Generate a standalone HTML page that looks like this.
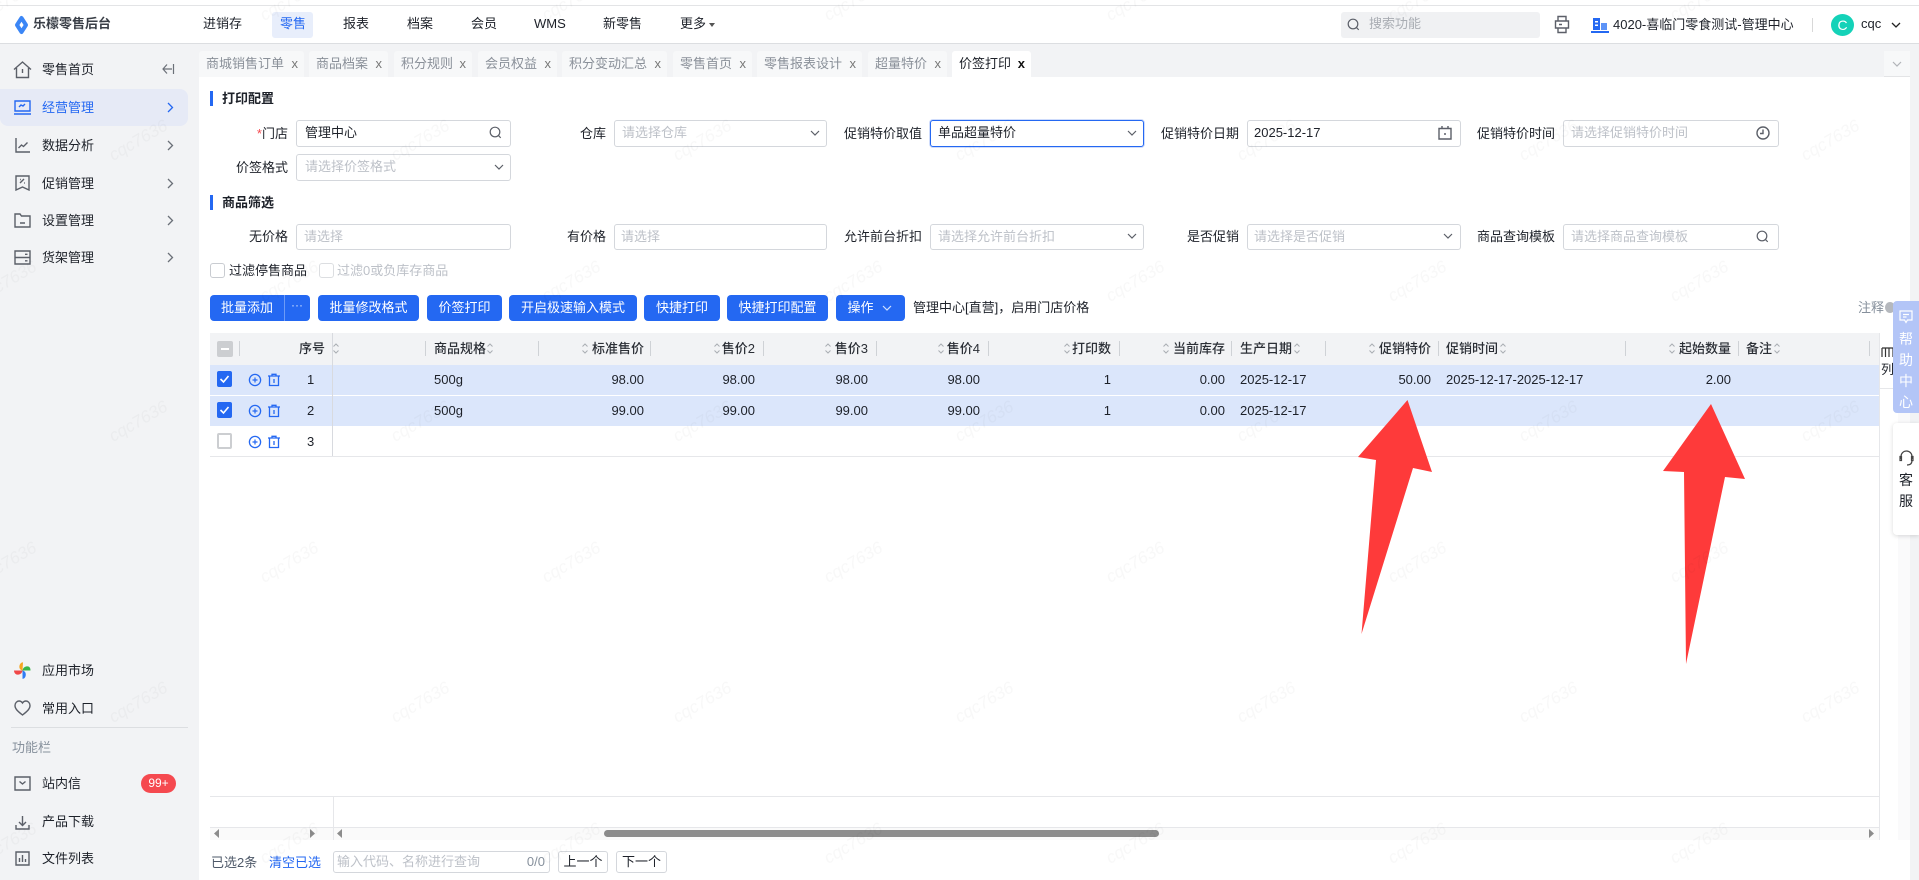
<!DOCTYPE html>
<html lang="zh-CN"><head><meta charset="utf-8"><title>价签打印</title>
<style>
html,body{margin:0;padding:0}
body{width:1919px;height:880px;overflow:hidden;position:relative;background:#fff;font:13px/18px "Liberation Sans","Noto Sans CJK SC",sans-serif;color:#1d2129}
div,span,svg{position:absolute;box-sizing:border-box}
.t{white-space:nowrap;line-height:18px}
.g{color:#86909c}
.p{color:#bdc1c8}
.b{font-weight:500;color:#2b2f36}
.i{background:#fff;border:1px solid #d4d7dc;border-radius:3px;height:27px}
.tab{top:51px;height:26px;background:#f7f8f9;border-radius:3px 3px 0 0;color:#8a9099;line-height:26px;padding-left:7px;white-space:nowrap}
.tab u{position:absolute;right:6px;top:0;text-decoration:none;color:#777;font-size:13px}
.btn{top:295px;height:26px;background:#2468f2;border-radius:4px;color:#fff;text-align:center;line-height:26px;white-space:nowrap}
.bar{width:3px;height:15px;left:210px;background:#2468f2}
.sv{left:160px;width:12px;height:12px}
.dv{top:341px;width:1px;height:15px;background:#cfd2d6}
.ic{fill:none;stroke:#5b5f68;stroke-width:1.4}
.r{text-align:right}
</style></head><body>
<svg width="0" height="0" style="left:0;top:0"><defs>
<g id="caret"><path d="M1.500 4.500L4 2l2.500 2.500M1.500 8.500L4 11l2.500-2.500" fill="none" stroke="#a9adb3" stroke-width="1"/></g>
<g id="plus"><circle cx="7" cy="7" r="5.600" fill="none" stroke="#2468f2" stroke-width="1.300"/><path d="M4.500 7h5M7 4.500v5" stroke="#2468f2" stroke-width="1.200"/></g>
<g id="trash"><path d="M1 3h12M5 3V1.300h4V3M2.500 3v9.500h9V3M7 6v4" fill="none" stroke="#2468f2" stroke-width="1.300"/></g>
<g id="down"><path d="M1 1l4 4 4-4" fill="none" stroke="#5b5f68" stroke-width="1.200"/></g>
<g id="mag"><circle cx="6" cy="6" r="4.800" fill="none" stroke="#5b5f68" stroke-width="1.200"/><path d="M9.500 9.500l2.200 2.400" stroke="#5b5f68" stroke-width="1.200"/></g>
<g id="rt"><path d="M1 1l4.500 4.500L1 10" fill="none" stroke="#6b7078" stroke-width="1.300"/></g>
</defs></svg>

<!-- top -->
<div style="left:0;top:5px;width:1919px;height:39px;background:#fff;border-top:1px solid #e3e4e6;border-bottom:1px solid #dcdee1"></div>
<svg style="left:14px;top:15px" width="15" height="20" viewBox="0 0 15 20"><path d="M7.500 3L12 10 7.500 17 3 10Z" fill="none" stroke="#3b86f6" stroke-width="4" stroke-linejoin="round"/></svg>
<span class="t" style="left:33px;top:15px;font-weight:700;color:#3a3f47">乐檬零售后台</span>
<span class="t" style="left:203px;top:15px">进销存</span>
<div style="left:272px;top:12px;width:41px;height:26px;background:#e8eefb;border-radius:3px"></div>
<span class="t" style="left:280px;top:15px;color:#2468f2">零售</span>
<span class="t" style="left:343px;top:15px">报表</span>
<span class="t" style="left:407px;top:15px">档案</span>
<span class="t" style="left:471px;top:15px">会员</span>
<span class="t" style="left:534px;top:15px">WMS</span>
<span class="t" style="left:603px;top:15px">新零售</span>
<span class="t" style="left:680px;top:15px">更多</span>
<svg style="left:709px;top:23px" width="6" height="4"><path d="M0 0h6L3 4z" fill="#555"/></svg>
<div style="left:1341px;top:12px;width:199px;height:26px;background:#f0f1f3;border-radius:3px"></div>
<svg style="left:1347px;top:18px" width="13" height="14"><use href="#mag"/></svg>
<span class="t p" style="left:1369px;top:15px;color:#a9adb3">搜索功能</span>
<svg style="left:1554px;top:15px" width="16" height="19" viewBox="0 0 16 19" class="ic"><path d="M4 6V1.500h8V6M1.500 6h13v7h-13zM4 13v4.500h8V13M5 9.500h3"/></svg>
<svg style="left:1591px;top:17px" width="18" height="16" viewBox="0 0 18 16"><path d="M2 1h7v12H2z" fill="#2468f2"/><path d="M10 6h6v7h-6z" fill="#5c93f7"/><path d="M0 14h18v2H0z" fill="#2468f2"/><path d="M4 4h3v1.500H4zM4 7.500h3V9H4z" fill="#fff"/></svg>
<span class="t" style="left:1613px;top:16px">4020-喜临门零食测试-管理中心</span>
<div style="left:1812px;top:18px;width:1px;height:14px;background:#d8d8d8"></div>
<div style="left:1831px;top:14px;width:23px;height:22px;border-radius:50%;background:#14d2b8;color:#fff;text-align:center;line-height:22px;font-size:14px">C</div>
<span class="t" style="left:1861px;top:15px">cqc</span>
<svg style="left:1891px;top:22px" width="10" height="7"><path d="M1 1l4 4 4-4" fill="none" stroke="#222" stroke-width="1.300"/></svg>

<!-- sidebar -->
<div style="left:0;top:44px;width:199px;height:836px;background:#f2f3f5"></div>
<svg style="left:13px;top:61px" width="19" height="18" viewBox="0 0 19 18" class="ic"><path d="M1 8.500L9.500 1 18 8.500M3.500 7v9.500h12V7M9.500 8v4"/></svg>
<span class="t" style="left:42px;top:61px">零售首页</span>
<svg style="left:162px;top:63px" width="13" height="12" viewBox="0 0 13 12" fill="none" stroke="#6b7078" stroke-width="1.200"><path d="M5 1.500L1 6l4 4.500M1 6h9M11.500 1v10"/></svg>
<div style="left:0;top:89px;width:188px;height:37px;background:#e6eaf6;border-radius:0 8px 8px 8px"></div>
<svg style="left:14px;top:100px" width="17" height="15" viewBox="0 0 17 15" fill="none" stroke="#2468f2" stroke-width="1.400"><path d="M1 1h15v10H1zM0 14h17M5 7l2-2 2 1 2-2"/></svg>
<span class="t" style="left:42px;top:99px;color:#2468f2">经营管理</span>
<svg class="sv" style="left:167px;top:102px" width="7" height="11"><path d="M1 1l4.500 4.500L1 10" fill="none" stroke="#2468f2" stroke-width="1.300"/></svg>
<svg style="left:15px;top:138px" width="15" height="15" viewBox="0 0 15 15" class="ic"><path d="M1 0v14h14M3.500 10l3-3 2 1.500 4-4"/></svg>
<span class="t" style="left:42px;top:137px">数据分析</span>
<svg class="sv" style="left:167px;top:140px" width="7" height="11"><use href="#rt"/></svg>
<svg style="left:15px;top:175px" width="15" height="16" viewBox="0 0 15 16" class="ic"><path d="M1 1h13v14l-6.500-3L1 15zM5 8l4-4M5 4.500h.8M9 8h.8"/></svg>
<span class="t" style="left:42px;top:175px">促销管理</span>
<svg class="sv" style="left:167px;top:178px" width="7" height="11"><use href="#rt"/></svg>
<svg style="left:14px;top:213px" width="17" height="15" viewBox="0 0 17 15" class="ic"><path d="M1 1h5l1.500 2H16v11H1zM6 10h5"/></svg>
<span class="t" style="left:42px;top:212px">设置管理</span>
<svg class="sv" style="left:167px;top:215px" width="7" height="11"><use href="#rt"/></svg>
<svg style="left:14px;top:250px" width="17" height="15" viewBox="0 0 17 15" class="ic"><path d="M1 1h15v13H1zM1 7.500h15M11 4.300h2.500M11 10.800h2.500"/></svg>
<span class="t" style="left:42px;top:249px">货架管理</span>
<svg class="sv" style="left:167px;top:252px" width="7" height="11"><use href="#rt"/></svg>

<svg style="left:14px;top:662px" width="17" height="17" viewBox="0 0 17 17"><path d="M8.500 8.500C5 8 4.500 4 6.500 1.500c1-1 2-1.200 2.500-1z" fill="#f5a623"/><path d="M8.500 8.500C9 5 12 4 14.500 4.500c1.500.6 2 2 2 4z" fill="#39b54a"/><path d="M8.500 8.500c3.500.5 4 4.500 2.500 7-1 1-2 1.500-2.500 1.300z" fill="#2f7bf5"/><path d="M8.500 8.500c-.5 3.500-3.500 4.500-6 4-1.500-.6-2.500-2-2.500-4z" fill="#f04848"/></svg>
<span class="t" style="left:42px;top:662px">应用市场</span>
<svg style="left:14px;top:700px" width="17" height="16" viewBox="0 0 17 16" class="ic"><path d="M8.500 15C4 11.500 1 9 1 5.500 1 3 3 1 5 1c1.500 0 2.700.8 3.500 2C9.300 1.800 10.500 1 12 1c2 0 4 2 4 4.500 0 3.500-3 6-7.500 9.500z"/></svg>
<span class="t" style="left:42px;top:700px">常用入口</span>
<div style="left:11px;top:727px;width:177px;height:1px;background:#dcdee1"></div>
<span class="t" style="left:12px;top:739px;color:#86909c">功能栏</span>
<svg style="left:14px;top:776px" width="17" height="15" viewBox="0 0 17 15" class="ic"><path d="M1 1h15v13H1zM5.500 5.500L8.500 8l3-2.500"/></svg>
<span class="t" style="left:42px;top:775px">站内信</span>
<div style="left:141px;top:774px;width:35px;height:19px;border-radius:10px;background:#f5494f;color:#fff;text-align:center;line-height:19px;font-size:12px">99+</div>
<svg style="left:15px;top:815px" width="15" height="15" viewBox="0 0 15 15" class="ic"><path d="M7.500 1v9M4 7l3.500 3.500L11 7M1 10v4h13v-4"/></svg>
<span class="t" style="left:42px;top:813px">产品下载</span>
<svg style="left:15px;top:851px" width="15" height="15" viewBox="0 0 15 15" class="ic"><path d="M1 1h13v13H1zM4.500 11V7M7.500 11V4M10.500 11V8"/></svg>
<span class="t" style="left:42px;top:850px">文件列表</span>

<!-- tabs -->
<div style="left:199px;top:44px;width:1720px;height:33px;background:#f2f3f5"></div>
<div style="left:1910px;top:77px;width:9px;height:803px;background:#f2f3f5"></div>
<div class="tab" style="left:199px;width:105px">商城销售订单<u>x</u></div>
<div class="tab" style="left:309px;width:79px">商品档案<u>x</u></div>
<div class="tab" style="left:394px;width:78px">积分规则<u>x</u></div>
<div class="tab" style="left:478px;width:79px">会员权益<u>x</u></div>
<div class="tab" style="left:562px;width:105px">积分变动汇总<u>x</u></div>
<div class="tab" style="left:673px;width:79px">零售首页<u>x</u></div>
<div class="tab" style="left:757px;width:105px">零售报表设计<u>x</u></div>
<div class="tab" style="left:868px;width:79px">超量特价<u>x</u></div>
<div class="tab" style="left:952px;width:79px;background:#fff;color:#1d2129">价签打印<u style="color:#111;font-weight:700">x</u></div>
<div style="left:1884px;top:51px;width:26px;height:26px;background:#f7f8f9;border-bottom:1px solid #e3e4e6"></div>
<svg style="left:1892px;top:61px" width="10" height="7"><use href="#down" style="opacity:.45"/></svg>

<!-- form -->
<div class="bar" style="top:91px"></div><span class="t" style="left:222px;top:90px;font-weight:700">打印配置</span>
<span class="t r" style="right:1631px;top:125px"><span style="position:static;color:#f5494f">*</span>门店</span>
<div class="i" style="left:296px;top:120px;width:215px"></div><span class="t" style="left:305px;top:124px">管理中心</span>
<svg style="left:489px;top:126px" width="13" height="14"><use href="#mag"/></svg>
<span class="t r" style="right:1313px;top:125px">仓库</span>
<div class="i" style="left:614px;top:120px;width:213px"></div><span class="t p" style="left:622px;top:124px">请选择仓库</span>
<svg style="left:810px;top:130px" width="10" height="7"><use href="#down"/></svg>
<span class="t r" style="right:997px;top:125px">促销特价取值</span>
<div class="i" style="left:930px;top:120px;width:214px;border-color:#2468f2;box-shadow:0 0 0 1px #cfdcfb"></div><span class="t" style="left:938px;top:124px">单品超量特价</span>
<svg style="left:1127px;top:130px" width="10" height="7"><use href="#down"/></svg>
<span class="t r" style="right:680px;top:125px">促销特价日期</span>
<div class="i" style="left:1247px;top:120px;width:214px"></div><span class="t" style="left:1254px;top:124px">2025-12-17</span>
<svg style="left:1438px;top:126px" width="14" height="14" viewBox="0 0 14 14" class="ic" ><path d="M1 2.500h12V13H1zM4 0v3M10 0v3M6 8h2"/></svg>
<span class="t r" style="right:364px;top:125px">促销特价时间</span>
<div class="i" style="left:1563px;top:120px;width:216px"></div><span class="t p" style="left:1571px;top:124px">请选择促销特价时间</span>
<svg style="left:1756px;top:126px" width="14" height="14" viewBox="0 0 14 14" class="ic"><circle cx="7" cy="7" r="6"/><path d="M7 3.500V7.500H4"/></svg>
<span class="t r" style="right:1631px;top:159px">价签格式</span>
<div class="i" style="left:296px;top:154px;width:215px"></div><span class="t p" style="left:305px;top:158px">请选择价签格式</span>
<svg style="left:494px;top:164px" width="10" height="7"><use href="#down"/></svg>

<div class="bar" style="top:195px"></div><span class="t" style="left:222px;top:194px;font-weight:700">商品筛选</span>
<span class="t r" style="right:1631px;top:228px">无价格</span>
<div class="i" style="left:296px;top:224px;width:215px;height:26px"></div><span class="t p" style="left:304px;top:228px">请选择</span>
<span class="t r" style="right:1313px;top:228px">有价格</span>
<div class="i" style="left:614px;top:224px;width:213px;height:26px"></div><span class="t p" style="left:621px;top:228px">请选择</span>
<span class="t r" style="right:997px;top:228px">允许前台折扣</span>
<div class="i" style="left:930px;top:224px;width:214px;height:26px"></div><span class="t p" style="left:938px;top:228px">请选择允许前台折扣</span>
<svg style="left:1127px;top:233px" width="10" height="7"><use href="#down"/></svg>
<span class="t r" style="right:680px;top:228px">是否促销</span>
<div class="i" style="left:1247px;top:224px;width:214px;height:26px"></div><span class="t p" style="left:1254px;top:228px">请选择是否促销</span>
<svg style="left:1443px;top:233px" width="10" height="7"><use href="#down"/></svg>
<span class="t r" style="right:364px;top:228px">商品查询模板</span>
<div class="i" style="left:1563px;top:224px;width:216px;height:26px"></div><span class="t p" style="left:1571px;top:228px">请选择商品查询模板</span>
<svg style="left:1756px;top:230px" width="13" height="14"><use href="#mag"/></svg>

<div style="left:210px;top:263px;width:15px;height:15px;border:1px solid #c9ccd1;border-radius:3px"></div><span class="t" style="left:229px;top:262px">过滤停售商品</span>
<div style="left:319px;top:263px;width:15px;height:15px;border:1px solid #dcdee1;border-radius:3px"></div><span class="t p" style="left:337px;top:262px">过滤0或负库存商品</span>

<!-- toolbar -->
<div class="btn" style="left:210px;width:100px;padding-right:26px">批量添加</div>
<div style="left:284px;top:295px;width:1px;height:26px;background:#6d9bf6"></div>
<div class="t" style="left:284px;top:296px;width:26px;text-align:center;color:#cfe0ff;font-size:12px;letter-spacing:0">···</div>
<div class="btn" style="left:318px;width:101px">批量修改格式</div>
<div class="btn" style="left:427px;width:75px">价签打印</div>
<div class="btn" style="left:509px;width:128px">开启极速输入模式</div>
<div class="btn" style="left:644px;width:76px">快捷打印</div>
<div class="btn" style="left:727px;width:101px">快捷打印配置</div>
<div class="btn" style="left:836px;width:69px;padding-right:20px">操作</div>
<svg style="left:882px;top:305px" width="10" height="7"><path d="M1 1l4 4 4-4" fill="none" stroke="#cfe0ff" stroke-width="1.200"/></svg>
<span class="t" style="left:913px;top:299px">管理中心[直营]，启用门店价格</span>
<span class="t g" style="left:1858px;top:299px">注释</span>
<div style="left:1885px;top:302px;width:10px;height:11px;border-radius:50%;background:#b5b8bd"></div>

<!-- table -->
<div style="left:210px;top:333px;width:1669px;height:32px;background:#f2f3f5"></div>
<div style="left:210px;top:365px;width:1669px;height:30px;background:#dbe6fb"></div>
<div style="left:210px;top:396px;width:1669px;height:30px;background:#dbe6fb"></div>
<div style="left:210px;top:456px;width:1669px;height:1px;background:#e6e7ea"></div>
<div style="left:332px;top:333px;width:1px;height:123px;background:#d8dadf"></div>
<div style="left:1879px;top:333px;width:1px;height:507px;background:#e6e7ea"></div>
<div style="left:1880px;top:388px;width:18px;height:1px;background:#e6e7ea"></div>
<div style="left:1880px;top:333px;width:18px;height:55px;background:#fff"></div>
<div style="left:1898px;top:333px;width:12px;height:507px;background:#fafafb"></div>

<div style="left:217px;top:341px;width:16px;height:16px;background:#ccced1;border-radius:2px"></div>
<div style="left:221px;top:348px;width:8px;height:2px;background:#fff"></div>
<div class="dv" style="left:239px"></div>
<span class="t b" style="left:299px;top:340px">序号</span>
<svg style="left:332px;top:342px" width="8" height="13"><use href="#caret"/></svg>
<span class="t b" style="left:434px;top:340px">商品规格</span><svg style="left:486px;top:342px" width="8" height="13"><use href="#caret"/></svg>
<span class="t b r" style="right:1275px;top:340px">标准售价</span><svg style="left:581px;top:342px" width="8" height="13"><use href="#caret"/></svg>
<span class="t b r" style="right:1164px;top:340px">售价2</span><svg style="left:713px;top:342px" width="8" height="13"><use href="#caret"/></svg>
<span class="t b r" style="right:1051px;top:340px">售价3</span><svg style="left:824px;top:342px" width="8" height="13"><use href="#caret"/></svg>
<span class="t b r" style="right:939px;top:340px">售价4</span><svg style="left:937px;top:342px" width="8" height="13"><use href="#caret"/></svg>
<span class="t b r" style="right:808px;top:340px">打印数</span><svg style="left:1063px;top:342px" width="8" height="13"><use href="#caret"/></svg>
<span class="t b r" style="right:694px;top:340px">当前库存</span><svg style="left:1162px;top:342px" width="8" height="13"><use href="#caret"/></svg>
<span class="t b" style="left:1240px;top:340px">生产日期</span><svg style="left:1293px;top:342px" width="8" height="13"><use href="#caret"/></svg>
<span class="t b r" style="right:488px;top:340px">促销特价</span><svg style="left:1368px;top:342px" width="8" height="13"><use href="#caret"/></svg>
<span class="t b" style="left:1446px;top:340px">促销时间</span><svg style="left:1499px;top:342px" width="8" height="13"><use href="#caret"/></svg>
<span class="t b r" style="right:188px;top:340px">起始数量</span><svg style="left:1668px;top:342px" width="8" height="13"><use href="#caret"/></svg>
<span class="t b" style="left:1746px;top:340px">备注</span><svg style="left:1773px;top:342px" width="8" height="13"><use href="#caret"/></svg>
<div class="dv" style="left:425px"></div><div class="dv" style="left:538px"></div><div class="dv" style="left:650px"></div><div class="dv" style="left:763px"></div><div class="dv" style="left:876px"></div><div class="dv" style="left:988px"></div><div class="dv" style="left:1119px"></div><div class="dv" style="left:1231px"></div><div class="dv" style="left:1325px"></div><div class="dv" style="left:1438px"></div><div class="dv" style="left:1625px"></div><div class="dv" style="left:1738px"></div><div class="dv" style="left:1869px"></div>

<svg style="left:1881px;top:346px" width="13" height="12" viewBox="0 0 13 12" fill="none" stroke="#333" stroke-width="1.200"><path d="M1 2h11v9M1 2v9M4.500 2v9M8 2v9"/></svg>
<span class="t" style="left:1881px;top:361px">列</span>

<!-- row 1 -->
<div style="left:217px;top:371px;width:15px;height:16px;background:#2468f2;border-radius:2px"></div>
<svg style="left:217px;top:371px" width="15" height="16"><path d="M3.500 8l3 3 5-6" fill="none" stroke="#fff" stroke-width="1.600"/></svg>
<svg style="left:248px;top:373px" width="14" height="14"><use href="#plus"/></svg>
<svg style="left:267px;top:373px" width="14" height="14"><use href="#trash"/></svg>
<span class="t" style="left:307px;top:371px">1</span>
<span class="t" style="left:434px;top:371px">500g</span>
<span class="t r" style="right:1275px;top:371px">98.00</span>
<span class="t r" style="right:1164px;top:371px">98.00</span>
<span class="t r" style="right:1051px;top:371px">98.00</span>
<span class="t r" style="right:939px;top:371px">98.00</span>
<span class="t r" style="right:808px;top:371px">1</span>
<span class="t r" style="right:694px;top:371px">0.00</span>
<span class="t" style="left:1240px;top:371px">2025-12-17</span>
<span class="t r" style="right:488px;top:371px">50.00</span>
<span class="t" style="left:1446px;top:371px">2025-12-17-2025-12-17</span>
<span class="t r" style="right:188px;top:371px">2.00</span>
<!-- row 2 -->
<div style="left:217px;top:402px;width:15px;height:16px;background:#2468f2;border-radius:2px"></div>
<svg style="left:217px;top:402px" width="15" height="16"><path d="M3.500 8l3 3 5-6" fill="none" stroke="#fff" stroke-width="1.600"/></svg>
<svg style="left:248px;top:404px" width="14" height="14"><use href="#plus"/></svg>
<svg style="left:267px;top:404px" width="14" height="14"><use href="#trash"/></svg>
<span class="t" style="left:307px;top:402px">2</span>
<span class="t" style="left:434px;top:402px">500g</span>
<span class="t r" style="right:1275px;top:402px">99.00</span>
<span class="t r" style="right:1164px;top:402px">99.00</span>
<span class="t r" style="right:1051px;top:402px">99.00</span>
<span class="t r" style="right:939px;top:402px">99.00</span>
<span class="t r" style="right:808px;top:402px">1</span>
<span class="t r" style="right:694px;top:402px">0.00</span>
<span class="t" style="left:1240px;top:402px">2025-12-17</span>
<!-- row 3 -->
<div style="left:217px;top:433px;width:15px;height:16px;border:2px solid #ccced1;border-radius:2px"></div>
<svg style="left:248px;top:435px" width="14" height="14"><use href="#plus"/></svg>
<svg style="left:267px;top:435px" width="14" height="14"><use href="#trash"/></svg>
<span class="t" style="left:307px;top:433px">3</span>

<!-- scroll -->
<div style="left:210px;top:796px;width:1669px;height:1px;background:#e6e7ea"></div>
<div style="left:210px;top:827px;width:1669px;height:13px;background:#fafafa;border-top:1px solid #e6e7ea"></div>
<div style="left:333px;top:796px;width:1px;height:44px;background:#e6e7ea"></div>
<div style="left:604px;top:830px;width:555px;height:7px;background:#8c8c8c;border-radius:4px"></div>
<svg style="left:214px;top:829px" width="6" height="9"><path d="M5 0v9L0 4.500z" fill="#8c8c8c"/></svg>
<svg style="left:310px;top:829px" width="6" height="9"><path d="M0 0v9l5-4.500z" fill="#8c8c8c"/></svg>
<svg style="left:337px;top:829px" width="6" height="9"><path d="M5 0v9L0 4.500z" fill="#8c8c8c"/></svg>
<svg style="left:1869px;top:829px" width="6" height="9"><path d="M0 0v9l5-4.500z" fill="#8c8c8c"/></svg>

<!-- bottom -->
<span class="t" style="left:211px;top:854px;color:#4e5969">已选2条</span>
<span class="t" style="left:269px;top:854px;color:#2468f2">清空已选</span>
<div class="i" style="left:333px;top:851px;width:217px;height:22px"></div>
<span class="t p" style="left:337px;top:853px">输入代码、名称进行查询</span>
<span class="t g" style="right:1374px;top:853px">0/0</span>
<div class="i" style="left:558px;top:851px;width:50px;height:22px;text-align:center;line-height:20px;color:#1d2129">上一个</div>
<div class="i" style="left:616px;top:851px;width:51px;height:22px;text-align:center;line-height:20px;color:#1d2129">下一个</div>

<!-- arrows -->
<svg style="left:0;top:0" width="1919" height="880"><polygon points="1407.500,400 1432,472 1413,468 1361.500,634 1376,460 1358,457" fill="#fe3a3a"/><polygon points="1711,404 1745,479 1725,477 1686,664 1684,472 1663,471" fill="#fe3a3a"/></svg>

<!-- side float -->
<div style="left:1893px;top:301px;width:26px;height:112px;background:#b3c5f7;border-radius:4px 0 0 4px"></div>
<svg style="left:1899px;top:310px" width="14" height="14" viewBox="0 0 14 14" fill="none" stroke="#fff" stroke-width="1.200"><path d="M1 1h12v9H8.500L7 12.500 5.500 10H1zM4 4.500h6M4 7h3.500"/></svg>
<div style="left:1893px;top:329px;width:26px;text-align:center;color:#fff;line-height:21px;font-size:14px">帮<br>助<br>中<br>心</div>
<div style="left:1893px;top:423px;width:26px;height:112px;background:#fff;border-radius:4px 0 0 4px;box-shadow:0 1px 5px rgba(0,0,0,.15)"></div>
<svg style="left:1899px;top:450px" width="15" height="17" viewBox="0 0 15 17" fill="none" stroke="#444" stroke-width="1.200"><path d="M2 9V6.500a5.500 5.500 0 0 1 11 0V9M1 6.500h1.500v4H1zM12.500 6.500H14v4h-1.500zM13 10.500c0 3-2 4.500-5 4.500"/></svg>
<div style="left:1893px;top:470px;width:26px;text-align:center;color:#1d2129;line-height:21px;font-size:14px">客<br>服</div>

<!-- watermark -->
<svg style="left:0;top:0;pointer-events:none" width="1919" height="880"><defs><pattern id="wm" x="-60" y="-60" width="282" height="281" patternUnits="userSpaceOnUse"><text transform="translate(201 205) rotate(-30)" text-anchor="middle" font-family="Liberation Sans" font-size="17" font-style="italic" fill="#000" fill-opacity=".028">cqc7636</text><text transform="translate(70 65) rotate(-30)" text-anchor="middle" font-family="Liberation Sans" font-size="17" font-style="italic" fill="#000" fill-opacity=".028">cqc7636</text></pattern></defs><rect width="1919" height="880" fill="url(#wm)"/></svg>
</body></html>
